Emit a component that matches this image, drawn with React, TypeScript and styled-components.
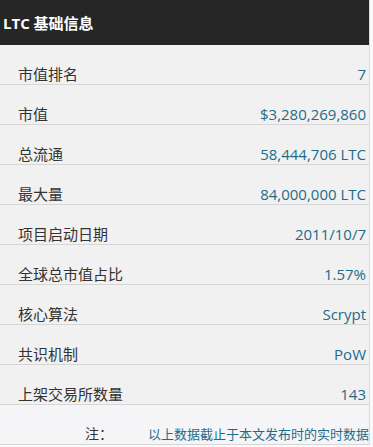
import React from 'react'
import styled, { createGlobalStyle } from 'styled-components'

const GlobalStyle = createGlobalStyle`
  body {
    margin: 0;
    background: #fafafa;
    font-family: "Open Sans", "Noto Sans CJK SC", sans-serif;
  }
`

const Panel = styled.div`
  width: 369px;
  background: #f1f1f1;
  border-right: 1px solid #dcdcdc;
`

const Header = styled.div`
  height: 45px;
  background: #262626;
  color: #fff;
  display: flex;
  align-items: center;
  padding-left: 3px;
  font-size: 15px;
  font-weight: 700;
`

const Row = styled.div<{ $note?: boolean }>`
  display: flex;
  justify-content: space-between;
  align-items: center;
  box-sizing: content-box;
  height: 19px;
  padding: 19px 3px 1px 18px;
  border-bottom: 1px solid #d6d6d6;
  background: ${({ $note }) => ($note ? '#f5f5f7' : '#f1f1f1')};
  line-height: 18px;
`

const Label = styled.span`
  color: #333;
  font-size: 15px;
`

const Value = styled.span`
  color: #1d6c8a;
  font-size: 15px;
`

const NoteLabel = styled.span`
  color: #333;
  font-size: 14px;
  width: 62px;
  margin-left: 67px;
`

const NoteText = styled.span`
  color: #1d6c8a;
  font-size: 13px;
  margin-left: auto;
  margin-right: -3px;
  white-space: nowrap;
`

const rows: [string, string][] = [
  ['市值排名', '7'],
  ['市值', '$3,280,269,860'],
  ['总流通', '58,444,706 LTC'],
  ['最大量', '84,000,000 LTC'],
  ['项目启动日期', '2011/10/7'],
  ['全球总市值占比', '1.57%'],
  ['核心算法', 'Scrypt'],
  ['共识机制', 'PoW'],
  ['上架交易所数量', '143'],
]

const App: React.FC = () => {
  return (
    <>
      <GlobalStyle />
      <Panel>
        <Header>LTC 基础信息</Header>
        {rows.map(([label, value]) => (
          <Row key={label}>
            <Label>{label}</Label>
            <Value>{value}</Value>
          </Row>
        ))}
        <Row $note>
          <NoteLabel>注：</NoteLabel>
          <NoteText>以上数据截止于本文发布时的实时数据</NoteText>
        </Row>
      </Panel>
    </>
  )
}

export default App
